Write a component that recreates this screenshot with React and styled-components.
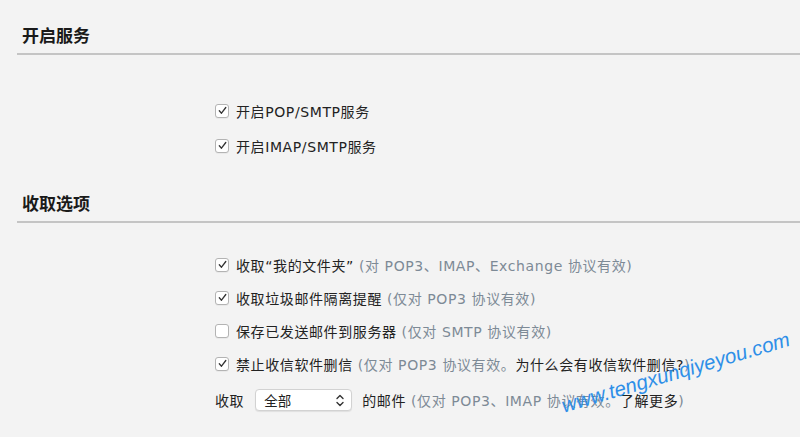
import React from 'react';
import styled, { createGlobalStyle } from 'styled-components';

const Global = createGlobalStyle`
  html, body { margin:0; padding:0; background:#f3f3f3; }
  body {
    font-family: "DejaVu Sans", "Noto Sans CJK SC", sans-serif;
    color:#222;
    font-size:14px;
  }
`;

const Page = styled.div`
  position:relative;
  width:800px;
  height:437px;
  overflow:hidden;
  background:#f3f3f3;
`;

const Title = styled.h2`
  margin:${({first}) => first ? '23px' : '28px'} 0 0 22px;
  font-family:"Noto Sans CJK SC", sans-serif;
  font-size:17px;
  line-height:24px;
  font-weight:bold;
  color:#1a1a1a;
`;

const Rule = styled.div`
  margin:6px 0 0 17px;
  height:2px;
  background:#c4c4c4;
`;

const List = styled.div`
  padding:${({top}) => top}px 0 0 215px;
`;

const Row = styled.div`
  display:flex;
  align-items:center;
  height:${({h}) => h || 33}px;
  white-space:nowrap;
  letter-spacing:0.6px;
`;

const Box = styled.span`
  box-sizing:border-box;
  flex:none;
  width:14px;
  height:14px;
  margin-right:7px;
  border:1px solid #b3b3b3;
  border-radius:3px;
  background:#fff;
  display:flex;
  align-items:center;
  justify-content:center;
  box-shadow:0 1px 0 rgba(0,0,0,0.04);
`;

const Hint = styled.span`
  color:#7d8a96;
  margin-left:5px;
`;

const Dark = styled.span`
  color:#222;
`;

const Select = styled.div`
  box-sizing:border-box;
  display:flex;
  align-items:center;
  justify-content:space-between;
  width:97px;
  height:22px;
  margin:0 10px 0 11px;
  padding:0 7px 0 8px;
  background:#fff;
  border:1px solid #d2d2d2;
  border-radius:4px;
  box-shadow:0 1px 1px rgba(0,0,0,0.08);
  font-size:13.5px;
  letter-spacing:0;
`;

const Watermark = styled.div`
  position:absolute;
  left:562px;
  top:393px;
  transform:rotate(-16.5deg);
  transform-origin:left center;
  font-family:"Liberation Sans", sans-serif;
  font-size:20.5px;
  line-height:26px;
  font-style:italic;
  color:#2e8fe8;
  white-space:nowrap;
`;

const Check = ({ on }) => (
  <Box>
    {on && (
      <svg width="9" height="9" viewBox="0 0 9 9">
        <path d="M1.3 4.8 L3.5 7.2 L7.8 1.5" fill="none" stroke="#333" strokeWidth="1.3" strokeLinecap="round" strokeLinejoin="round" />
      </svg>
    )}
  </Box>
);

const Option = ({ on, label, hint }) => (
  <Row>
    <Check on={on} />
    <span>{label}</span>
    {hint && <Hint>{hint}</Hint>}
  </Row>
);

export default function App() {
  return (
    <Page>
      <Global />
      <Title first>开启服务</Title>
      <Rule />
      <List top={38}>
        <Row h={35}><Check on /><span>开启POP/SMTP服务</span></Row>
        <Row h={35}><Check on /><span>开启IMAP/SMTP服务</span></Row>
      </List>

      <Title>收取选项</Title>
      <Rule />
      <List top={25}>
        <Option on label="收取“我的文件夹”" hint="(对 POP3、IMAP、Exchange 协议有效)" />
        <Option on label="收取垃圾邮件隔离提醒" hint="(仅对 POP3 协议有效)" />
        <Option label="保存已发送邮件到服务器" hint="(仅对 SMTP 协议有效)" />
        <Row>
          <Check on />
          <span>禁止收信软件删信</span>
          <Hint>(仅对 POP3 协议有效。<Dark>为什么会有收信软件删信?</Dark>)</Hint>
        </Row>
        <Row h={40}>
          <span>收取</span>
          <Select>
            <span>全部</span>
            <svg width="8" height="13" viewBox="0 0 8 13">
              <path d="M1 4.5 L4 1.5 L7 4.5 M1 8.5 L4 11.5 L7 8.5" fill="none" stroke="#333" strokeWidth="1.4" strokeLinecap="round" strokeLinejoin="round" />
            </svg>
          </Select>
          <span>的邮件</span>
          <Hint>(仅对 POP3、IMAP 协议有效。<Dark>了解更多</Dark>)</Hint>
        </Row>
      </List>
      <Watermark>www.tengxunqiyeyou.com</Watermark>
    </Page>
  );
}
